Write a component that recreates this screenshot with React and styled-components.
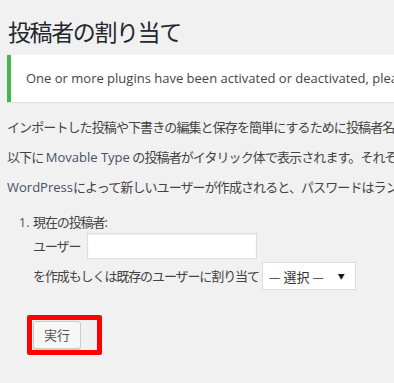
import React from "react";
import styled, { createGlobalStyle } from "styled-components";

const Global = createGlobalStyle`
  html, body { margin: 0; padding: 0; background: #f1f1f1; overflow: hidden; }
  body {
    font-family: "Open Sans", "Noto Sans CJK JP", sans-serif;
    font-size: 13px;
    color: #444;
  }
`;

const Wrap = styled.div`
  padding: 0 0 0 7px;
  width: 900px;
`;

const Title = styled.h1`
  margin: 0;
  padding: 17px 0 0 1px;
  font-family: "Noto Sans CJK JP", sans-serif;
  font-size: 23px;
  font-weight: 400;
  line-height: 29px;
  letter-spacing: -1.4px;
  color: #23282d;
`;

const Notice = styled.div`
  margin-top: 9px;
  background: #fff;
  border-left: 4px solid #46b450;
  box-shadow: 0 1px 1px rgba(0, 0, 0, 0.06);
  padding: 14px 12px 14px 15px;
`;

const NoticeText = styled.p`
  margin: 0;
  line-height: 19px;
  font-family: "Open Sans", sans-serif;
  white-space: nowrap;
`;

const Para = styled.p`
  margin: 11px 0 0;
  line-height: 19px;
  white-space: nowrap;
  letter-spacing: -0.9px;
  font-family: "Open Sans", "Noto Sans CJK JP", sans-serif;
  &:first-of-type { margin-top: 16px; }
`;

const Latin = styled.span`
  letter-spacing: 0;
  color: #46506a;
`;

const List = styled.ol`
  margin: 16px 0 0;
  padding-left: 26px;
  line-height: 19px;
  letter-spacing: -1.1px;
  font-family: "Open Sans", "Noto Sans CJK JP", sans-serif;
  li::marker { color: #6a5434; letter-spacing: 0; }
`;

const Row = styled.div`
  display: flex;
  align-items: center;
  gap: 5px;
  margin-top: ${(p) => p.$mt || 0}px;
`;

const Input = styled.input`
  box-sizing: border-box;
  width: 170px;
  height: 26px;
  border: 1px solid #ddd;
  box-shadow: inset 0 1px 2px rgba(0, 0, 0, 0.07);
  background: #fff;
  margin: 0 0 0 2px;
  padding: 3px 5px;
`;

const SelectBox = styled.div`
  position: relative;
  box-sizing: border-box;
  width: 94px;
  height: 28px;
  border: 1px solid #ddd;
  background: #fff;
  display: flex;
  align-items: center;
  padding-left: 6px;
  margin-left: -2px;
  font-family: "Noto Sans CJK JP", sans-serif;
  font-size: 13px;
  letter-spacing: 0;
  color: #333;
`;

const Arrow = styled.span`
  position: absolute;
  right: 10px;
  top: 9px;
  font-size: 7px;
  color: #111;
  line-height: 8px;
`;

const Highlight = styled.div`
  display: inline-block;
  margin: 25px 0 0 20px;
  border: 5px solid #ff0000;
  border-radius: 2px;
  padding: 1px 16px 1px 1px;
`;

const Button = styled.button`
  display: block;
  box-sizing: border-box;
  height: 28px;
  padding: 0 10px;
  background: #f7f7f7;
  border: 1px solid #ccc;
  border-radius: 3px;
  box-shadow: 0 1px 0 #ccc;
  color: #555;
  font-family: "Noto Sans CJK JP", sans-serif;
  font-size: 13px;
  line-height: 26px;
`;

export default function App() {
  return (
    <>
      <Global />
      <Wrap>
        <Title>投稿者の割り当て</Title>
        <Notice>
          <NoticeText>
            One or more plugins have been activated or deactivated, please refresh the page.
          </NoticeText>
        </Notice>
        <Para>インポートした投稿や下書きの編集と保存を簡単にするために投稿者名を既存のユーザーに割り当てることができます。</Para>
        <Para>
          以下に <Latin>Movable Type</Latin> の投稿者がイタリック体で表示されます。それぞれの投稿者に対して、ユーザーを新規作成するか既存のユーザーを選択してください。
        </Para>
        <Para>
          <Latin>WordPress</Latin>によって新しいユーザーが作成されると、パスワードはランダムに生成されます。
        </Para>
        <List>
          <li>
            現在の投稿者:
            <Row $mt={1}>
              ユーザー
              <Input type="text" />
            </Row>
            <Row $mt={3}>
              を作成もしくは既存のユーザーに割り当て
              <SelectBox>
                — 選択 —
                <Arrow>▼</Arrow>
              </SelectBox>
            </Row>
          </li>
        </List>
        <Highlight>
          <Button>実行</Button>
        </Highlight>
      </Wrap>
    </>
  );
}
